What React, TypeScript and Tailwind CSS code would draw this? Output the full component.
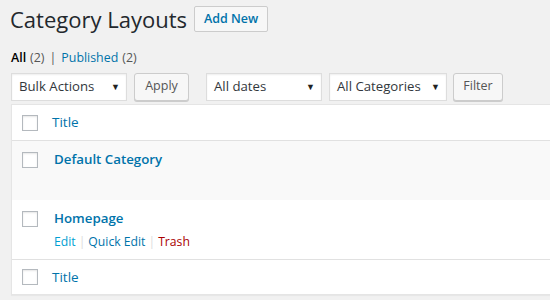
import React from "react";

const font = "font-['Segoe_UI','Open_Sans','Noto_Sans',sans-serif]";

const Checkbox: React.FC = () => (
  <span className="block w-4 h-4 shrink-0 bg-white border border-[#b4b9be] shadow-[inset_0_1px_2px_rgba(0,0,0,0.1)]" />
);

const Select: React.FC<{ label: string; width: string }> = ({ label, width }) => (
  <div
    className={`${width} h-[28px] bg-white border border-[#ddd] shadow-[inset_0_1px_2px_rgba(0,0,0,0.07)] flex items-center justify-between pl-[7px] pr-[6px] pt-[1px] text-[13.2px] text-[#32373c]`}
  >
    <span>{label}</span>
    <span className="text-[9px] text-[#222]">▼</span>
  </div>
);

const Button: React.FC<{ label: string; width: string }> = ({ label, width }) => (
  <div
    className={`${width} h-[28px] bg-[#f7f7f7] border border-[#ccc] rounded-[3px] shadow-[0_1px_0_#ccc] flex items-center justify-center text-[12.5px] text-[#555]`}
  >
    {label}
  </div>
);

export default function App() {
  const rows = [
    { title: "Default Category", alt: true, actions: false },
    { title: "Homepage", alt: false, actions: true },
  ];

  return (
    <div className={`w-[550px] h-[300px] overflow-hidden bg-[#f1f1f1] pl-[11px] ${font}`}>
      <div className="flex items-center pt-[4px] h-[34px]">
        <h1 className="text-[22px] leading-[29px] font-normal text-[#23282d] -ml-[1px]">Category Layouts</h1>
        <div className="ml-[7px] h-[26px] px-[9px] bg-[#f7f7f7] border border-[#ccc] rounded-[2px] flex items-center text-[12.5px] font-semibold text-[#0073aa]">
          Add New
        </div>
      </div>

      <div className="mt-[15px] flex items-center text-[12.4px] leading-[18px] text-[#555]">
        <span className="text-black font-semibold">All</span>
        <span className="ml-[4px]">(2)</span>
        <span className="mx-[5px] text-[#555]">|</span>
        <span className="text-[#0073aa]">Published</span>
        <span className="ml-[4px]">(2)</span>
      </div>

      <div className="mt-[5px] flex items-center h-[29px]">
        <Select label="Bulk Actions" width="w-[116px]" />
        <div className="ml-[7px]">
          <Button label="Apply" width="w-[55px]" />
        </div>
        <div className="ml-[17px]">
          <Select label="All dates" width="w-[116px]" />
        </div>
        <div className="ml-[7px]">
          <Select label="All Categories" width="w-[118px]" />
        </div>
        <div className="ml-[6px]">
          <Button label="Filter" width="w-[50px]" />
        </div>
      </div>

      <div className="mt-[3px] w-[600px] bg-white border border-[#e5e5e5] shadow-[0_1px_1px_rgba(0,0,0,0.04)]">
        <div className="h-[36px] flex items-center border-b border-[#e1e1e1] pl-[10px]">
          <Checkbox />
          <span className="ml-[14px] text-[13.5px] text-[#0073aa]">Title</span>
        </div>
        {rows.map((row) => (
          <div
            key={row.title}
            className={`h-[59px] flex items-start pl-[10px] pt-[11px] ${row.alt ? "bg-[#f9f9f9]" : "bg-white"}`}
          >
            <Checkbox />
            <div className="ml-[16px] -mt-[3px]">
              <div className="text-[13.3px] leading-[20px] font-semibold text-[#0073aa]">{row.title}</div>
              {row.actions && (
                <div className="mt-[5px] flex items-center text-[12.2px] leading-[18px]">
                  <span className="text-[#00a0d2]">Edit</span>
                  <span className="mx-[3px] text-[#ddd]">|</span>
                  <span className="text-[#0073aa]">Quick Edit</span>
                  <span className="mx-[3px] text-[#ddd]">|</span>
                  <span className="text-[#a00]">Trash</span>
                </div>
              )}
            </div>
          </div>
        ))}
        <div className="h-[35px] flex items-center border-t border-[#e1e1e1] pl-[10px]">
          <Checkbox />
          <span className="ml-[14px] text-[13.5px] text-[#0073aa]">Title</span>
        </div>
      </div>
    </div>
  );
}
